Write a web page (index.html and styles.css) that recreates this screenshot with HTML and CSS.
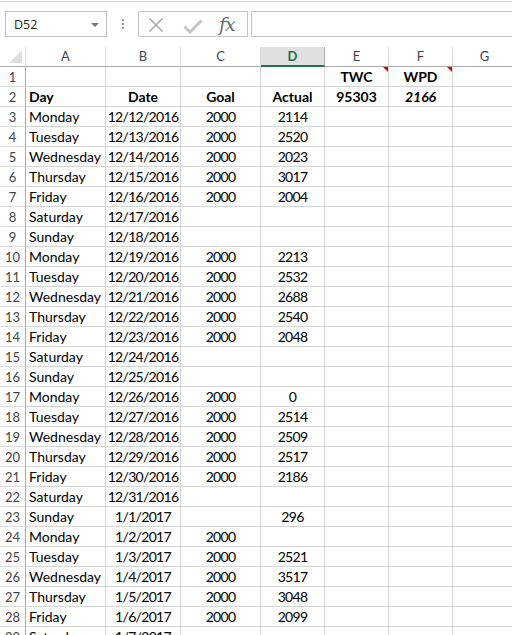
FILE: index.html
```html
<!DOCTYPE html>
<html>
<head>
<meta charset="utf-8">
<link rel="stylesheet" href="styles.css">
</head>
<body>
<div class="toolbar">
  <div class="namebox"><span class="nb-text">D52</span><span class="nb-arrow"></span></div>
  <div class="dots"><i></i><i></i><i></i></div>
  <div class="fxbox">
    <svg class="ico-x" width="16" height="16" viewBox="0 0 16 16"><path d="M1.5 1.5 L14.5 14.5 M14.5 1.5 L1.5 14.5" stroke="#a9a9a9" stroke-width="1.6" fill="none"/></svg>
    <svg class="ico-ok" width="20" height="16" viewBox="0 0 20 16"><path d="M1.5 8.5 L7 14 L18.5 2.5" stroke="#c4c4c4" stroke-width="3" fill="none"/></svg>
    <span class="fx">fx</span>
  </div>
  <div class="formula"></div>
</div>
<div class="sheet">
  <div class="corner"><span class="tri"></span></div>
  <div class="ch">A</div><div class="ch">B</div><div class="ch">C</div><div class="ch sel">D</div><div class="ch">E</div><div class="ch">F</div><div class="ch">G</div>

  <div class="rh">1</div><div class="c"></div><div class="c"></div><div class="c"></div><div class="c"></div><div class="c m b note">TWC</div><div class="c m b note">WPD</div><div class="c"></div>
  <div class="rh">2</div><div class="c b">Day</div><div class="c m b">Date</div><div class="c m b">Goal</div><div class="c m b">Actual</div><div class="c m b">95303</div><div class="c m b i">2166</div><div class="c"></div>
  <div class="rh">3</div><div class="c">Monday</div><div class="c m">12/12/2016</div><div class="c m">2000</div><div class="c m">2114</div><div class="c"></div><div class="c"></div><div class="c"></div>
  <div class="rh">4</div><div class="c">Tuesday</div><div class="c m">12/13/2016</div><div class="c m">2000</div><div class="c m">2520</div><div class="c"></div><div class="c"></div><div class="c"></div>
  <div class="rh">5</div><div class="c">Wednesday</div><div class="c m">12/14/2016</div><div class="c m">2000</div><div class="c m">2023</div><div class="c"></div><div class="c"></div><div class="c"></div>
  <div class="rh">6</div><div class="c">Thursday</div><div class="c m">12/15/2016</div><div class="c m">2000</div><div class="c m">3017</div><div class="c"></div><div class="c"></div><div class="c"></div>
  <div class="rh">7</div><div class="c">Friday</div><div class="c m">12/16/2016</div><div class="c m">2000</div><div class="c m">2004</div><div class="c"></div><div class="c"></div><div class="c"></div>
  <div class="rh">8</div><div class="c">Saturday</div><div class="c m">12/17/2016</div><div class="c m"></div><div class="c m"></div><div class="c"></div><div class="c"></div><div class="c"></div>
  <div class="rh">9</div><div class="c">Sunday</div><div class="c m">12/18/2016</div><div class="c m"></div><div class="c m"></div><div class="c"></div><div class="c"></div><div class="c"></div>
  <div class="rh">10</div><div class="c">Monday</div><div class="c m">12/19/2016</div><div class="c m">2000</div><div class="c m">2213</div><div class="c"></div><div class="c"></div><div class="c"></div>
  <div class="rh">11</div><div class="c">Tuesday</div><div class="c m">12/20/2016</div><div class="c m">2000</div><div class="c m">2532</div><div class="c"></div><div class="c"></div><div class="c"></div>
  <div class="rh">12</div><div class="c">Wednesday</div><div class="c m">12/21/2016</div><div class="c m">2000</div><div class="c m">2688</div><div class="c"></div><div class="c"></div><div class="c"></div>
  <div class="rh">13</div><div class="c">Thursday</div><div class="c m">12/22/2016</div><div class="c m">2000</div><div class="c m">2540</div><div class="c"></div><div class="c"></div><div class="c"></div>
  <div class="rh">14</div><div class="c">Friday</div><div class="c m">12/23/2016</div><div class="c m">2000</div><div class="c m">2048</div><div class="c"></div><div class="c"></div><div class="c"></div>
  <div class="rh">15</div><div class="c">Saturday</div><div class="c m">12/24/2016</div><div class="c m"></div><div class="c m"></div><div class="c"></div><div class="c"></div><div class="c"></div>
  <div class="rh">16</div><div class="c">Sunday</div><div class="c m">12/25/2016</div><div class="c m"></div><div class="c m"></div><div class="c"></div><div class="c"></div><div class="c"></div>
  <div class="rh">17</div><div class="c">Monday</div><div class="c m">12/26/2016</div><div class="c m">2000</div><div class="c m">0</div><div class="c"></div><div class="c"></div><div class="c"></div>
  <div class="rh">18</div><div class="c">Tuesday</div><div class="c m">12/27/2016</div><div class="c m">2000</div><div class="c m">2514</div><div class="c"></div><div class="c"></div><div class="c"></div>
  <div class="rh">19</div><div class="c">Wednesday</div><div class="c m">12/28/2016</div><div class="c m">2000</div><div class="c m">2509</div><div class="c"></div><div class="c"></div><div class="c"></div>
  <div class="rh">20</div><div class="c">Thursday</div><div class="c m">12/29/2016</div><div class="c m">2000</div><div class="c m">2517</div><div class="c"></div><div class="c"></div><div class="c"></div>
  <div class="rh">21</div><div class="c">Friday</div><div class="c m">12/30/2016</div><div class="c m">2000</div><div class="c m">2186</div><div class="c"></div><div class="c"></div><div class="c"></div>
  <div class="rh">22</div><div class="c">Saturday</div><div class="c m">12/31/2016</div><div class="c m"></div><div class="c m"></div><div class="c"></div><div class="c"></div><div class="c"></div>
  <div class="rh">23</div><div class="c">Sunday</div><div class="c m">1/1/2017</div><div class="c m"></div><div class="c m">296</div><div class="c"></div><div class="c"></div><div class="c"></div>
  <div class="rh">24</div><div class="c">Monday</div><div class="c m">1/2/2017</div><div class="c m">2000</div><div class="c m"></div><div class="c"></div><div class="c"></div><div class="c"></div>
  <div class="rh">25</div><div class="c">Tuesday</div><div class="c m">1/3/2017</div><div class="c m">2000</div><div class="c m">2521</div><div class="c"></div><div class="c"></div><div class="c"></div>
  <div class="rh">26</div><div class="c">Wednesday</div><div class="c m">1/4/2017</div><div class="c m">2000</div><div class="c m">3517</div><div class="c"></div><div class="c"></div><div class="c"></div>
  <div class="rh">27</div><div class="c">Thursday</div><div class="c m">1/5/2017</div><div class="c m">2000</div><div class="c m">3048</div><div class="c"></div><div class="c"></div><div class="c"></div>
  <div class="rh">28</div><div class="c">Friday</div><div class="c m">1/6/2017</div><div class="c m">2000</div><div class="c m">2099</div><div class="c"></div><div class="c"></div><div class="c"></div>
  <div class="rh">29</div><div class="c">Saturday</div><div class="c m">1/7/2017</div><div class="c m"></div><div class="c m"></div><div class="c"></div><div class="c"></div><div class="c"></div>
</div>
</body>
</html>
```
FILE: styles.css
```css
html, body {
  margin: 0;
  padding: 0;
  background: #fff;
}
body {
  width: 512px;
  height: 635px;
  overflow: hidden;
  font-family: "Lato", "Liberation Sans", sans-serif;
}

/* ---------- formula toolbar ---------- */
.toolbar {
  margin-top: 1px;
  height: 46px;
  box-sizing: border-box;
  border-top: 1px solid #d6d6d6;
  padding: 9px 0 0 5px;
  display: flex;
  align-items: flex-start;
}
.namebox {
  width: 102px;
  height: 26px;
  box-sizing: border-box;
  border: 1px solid #c6c6c6;
  display: flex;
  align-items: center;
  padding: 0 7px 0 8px;
  font-family: "Open Sans", "Noto Sans", sans-serif;
  font-size: 12.5px;
  color: #222;
}
.nb-text { flex: 1; }
.nb-arrow {
  width: 0;
  height: 0;
  border-left: 4px solid transparent;
  border-right: 4px solid transparent;
  border-top: 4px solid #777;
  margin-top: 1px;
}
.dots {
  margin-left: 15px;
  width: 2px;
  padding-top: 8px;
  display: flex;
  flex-direction: column;
  gap: 2px;
}
.dots i {
  display: block;
  width: 2px;
  height: 2px;
  background: #9a9a9a;
}
.fxbox {
  margin-left: 14px;
  width: 110px;
  height: 26px;
  box-sizing: border-box;
  border: 1px solid #c6c6c6;
  display: flex;
  align-items: center;
  padding-left: 9px;
}
.ico-x { margin-top: 1px; }
.ico-ok { margin-left: 19px; margin-top: 3px; }
.fx {
  margin-left: 16px;
  font-family: "DejaVu Serif", "Liberation Serif", serif;
  font-style: italic;
  font-size: 19px;
  color: #6a6a6a;
  letter-spacing: -1px;
  line-height: 20px;
}
.formula {
  margin-left: 3px;
  flex: 1;
  height: 26px;
  box-sizing: border-box;
  border: 1px solid #c6c6c6;
  margin-right: -2px;
}

/* ---------- sheet grid ---------- */
.sheet {
  display: grid;
  grid-template-columns: 26px 80px 75px 80px 64px 64px 64px 64px;
  grid-auto-rows: 20px;
  font-size: 14px;
  color: #000;
}
.corner, .ch, .rh, .c {
  box-sizing: border-box;
  white-space: nowrap;
  overflow: hidden;
}
.corner {
  border-right: 1px solid #dadada;
  border-bottom: 1px solid #ababab;
  position: relative;
}
.tri {
  position: absolute;
  right: 3px;
  bottom: 3px;
  width: 0;
  height: 0;
  border-left: 13px solid transparent;
  border-bottom: 13px solid #dfdfdf;
}
.ch {
  border-right: 1px solid #dadada;
  border-bottom: 1px solid #ababab;
  text-align: center;
  line-height: 19px;
  font-size: 13px;
  color: #444;
}
.ch.sel {
  background: #e1e1e1;
  color: #217346;
  font-weight: bold;
  border-bottom: 2px solid #217346;
  border-right-color: #ababab;
}
.rh {
  border-right: 1px solid #ababab;
  border-bottom: 1px solid #dadada;
  text-align: center;
  line-height: 20px;
  font-size: 13px;
  color: #444;
}
.c {
  border-right: 1px solid #d4d4d4;
  border-bottom: 1px solid #d4d4d4;
  padding: 0 3px;
  line-height: 20px;
}
.m { text-align: center; }
.m:not(.b) {
  letter-spacing: -0.7px;
  padding: 0;
}
.b { font-weight: bold; }
.i { font-style: italic; }
.note { position: relative; }
.note::after {
  content: "";
  position: absolute;
  top: 0;
  right: 0;
  width: 0;
  height: 0;
  border-left: 5px solid transparent;
  border-top: 5px solid #e00000;
}
```
